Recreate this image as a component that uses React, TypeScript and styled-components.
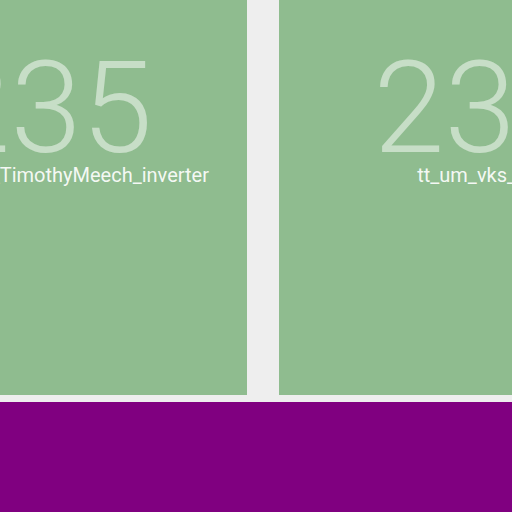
import React from 'react';
import styled, { createGlobalStyle } from 'styled-components';

const GlobalStyle = createGlobalStyle`
	html, body {
		margin: 0;
		padding: 0;
		background: #eeeeee;
		font-family: Roboto, "Noto Sans", sans-serif;
		overflow: hidden;
	}
`;

const Page = styled.div`
	width: 512px;
	height: 512px;
	display: flex;
	flex-direction: column;
	overflow: hidden;
`;

const Track = styled.div`
	display: flex;
	gap: 32px;
	height: 395px;
	margin-left: -155px;
	flex-shrink: 0;
`;

const Card = styled.div`
	flex: 0 0 402px;
	background: #8fbc8f;
	display: flex;
	flex-direction: column;
	align-items: center;
	padding-top: 51px;
	box-sizing: border-box;
	overflow: hidden;
`;

const Count = styled.div`
	font-size: 128px;
	font-weight: 300;
	line-height: 0.9;
	color: rgba(255, 255, 255, 0.5);
	white-space: nowrap;
`;

const Label = styled.div`
	font-size: 20px;
	line-height: 1;
	margin-top: -1px;
	color: rgba(255, 255, 255, 0.92);
	white-space: nowrap;
`;

const Footer = styled.div`
	margin-top: 7px;
	flex: 1;
	background: #800080;
`;

const projects = [
	{ count: 235, name: 'tt_um_wrish_TimothyMeech_inverter' },
	{ count: 235, name: 'tt_um_vks_led' },
];

const App = () => (
	<>
		<GlobalStyle />
		<Page>
			<Track>
				{projects.map((p, i) => (
					<Card key={i}>
						<Count>{p.count}</Count>
						<Label>{p.name}</Label>
					</Card>
				))}
			</Track>
			<Footer />
		</Page>
	</>
);

export default App;
